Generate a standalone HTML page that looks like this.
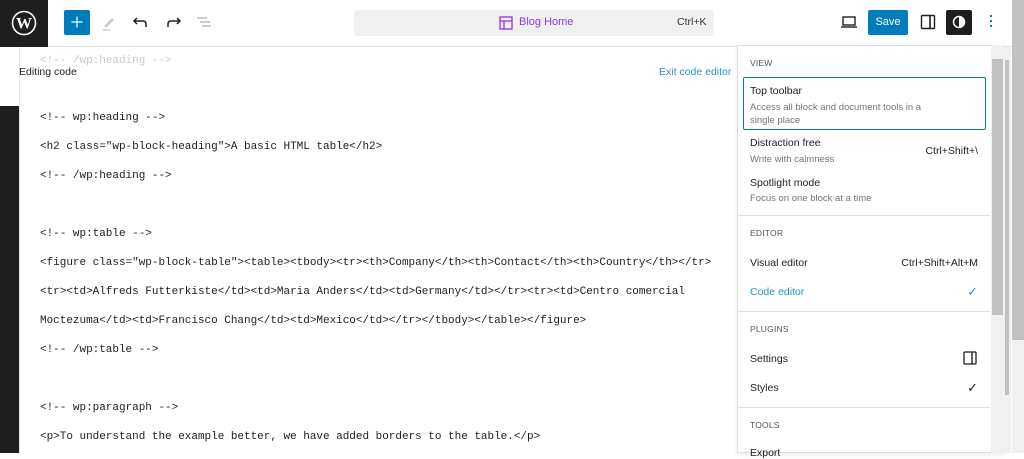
<!DOCTYPE html>
<html><head><style>
*{margin:0;padding:0;box-sizing:border-box}
body{width:1024px;height:453px;overflow:hidden;background:#fff;font-family:"Liberation Sans",sans-serif;position:relative;color:#1e1e1e}
.a{position:absolute}
.code{position:absolute;left:40px;font-family:"Liberation Mono",monospace;font-size:11px;letter-spacing:-0.02px;color:#1e1e1e;white-space:pre}
.lbl{position:absolute;left:750px;font-size:8.5px;color:#555;letter-spacing:.2px}
.it{position:absolute;left:750px;font-size:10.5px;color:#1e1e1e}
.sub{position:absolute;left:750px;font-size:9.5px;color:#757575}
.sc{position:absolute;right:46px;font-size:10.5px;color:#1e1e1e}
.sep{position:absolute;left:738px;width:252px;height:1px;background:#e0e0e0}
</style></head><body>
<div class="a" style="left:0;top:0;width:1012px;height:47px;border-bottom:1px solid #e0e0e0;background:#fff"></div>
<div class="a" style="left:0;top:0;width:48px;height:47px;background:#1e1e1e"></div>
<svg class="a" style="left:11px;top:10px" width="26" height="26" viewBox="0 0 26 26"><circle cx="13" cy="13" r="11.5" fill="none" stroke="#fff" stroke-width="1.6"/><text x="13" y="18.5" font-family="Liberation Serif" font-weight="bold" font-size="16" fill="#fff" text-anchor="middle">W</text></svg>
<div class="a" style="left:64px;top:10px;width:26px;height:25px;background:#007cba;border-radius:2px"></div>
<svg class="a" style="left:70px;top:15px" width="14" height="14" viewBox="0 0 14 14"><path d="M7 1.5v11M1.5 7h11" stroke="#fff" stroke-width="1.2"/></svg>
<svg class="a" style="left:100px;top:14px" width="18" height="18" viewBox="0 0 18 18"><path d="M4 12 L12 4 L14 6 L6 14" fill="#ccc"/><path d="M3 16h7" stroke="#ccc" stroke-width="1.5"/></svg>
<svg class="a" style="left:132px;top:15px" width="18" height="14" viewBox="0 0 18 14"><path d="M5 3 L2 6 L5 9 M2 6 H11 Q14 6 14 9 V12" fill="none" stroke="#1e1e1e" stroke-width="1.5"/></svg>
<svg class="a" style="left:164px;top:15px" width="18" height="14" viewBox="0 0 18 14"><path d="M13 3 L16 6 L13 9 M16 6 H7 Q4 6 4 9 V12" fill="none" stroke="#1e1e1e" stroke-width="1.5"/></svg>
<svg class="a" style="left:195px;top:15px" width="20" height="14" viewBox="0 0 20 14"><path d="M2 3h10M5 7h10M7 11h9" stroke="#bbb" stroke-width="1.4"/></svg>
<div class="a" style="left:354px;top:10px;width:360px;height:26px;background:#f0f0f0;border-radius:3px"></div>
<svg class="a" style="left:499px;top:16px" width="14" height="14" viewBox="0 0 14 14"><rect x="1" y="1" width="12" height="12" fill="none" stroke="#9b2fe0" stroke-width="1.3"/><path d="M1 5h12M5 5v8" stroke="#9b2fe0" stroke-width="1.3"/></svg>
<div class="a" style="left:519px;top:16px;font-size:11px;color:#8b3be0">Blog Home</div>
<div class="a" style="left:677px;top:16px;font-size:10.5px;color:#333">Ctrl+K</div>
<svg class="a" style="left:840px;top:15px" width="18" height="14" viewBox="0 0 18 14"><rect x="3" y="2" width="12" height="8" fill="none" stroke="#1e1e1e" stroke-width="1.4"/><path d="M1 12h16" stroke="#1e1e1e" stroke-width="1.4"/></svg>
<div class="a" style="left:868px;top:10px;width:40px;height:25px;background:#007cba;border-radius:2px;color:#fff;font-size:11px;text-align:center;line-height:25px">Save</div>
<svg class="a" style="left:920px;top:14px" width="16" height="16" viewBox="0 0 16 16"><rect x="1.5" y="1.5" width="13" height="13" rx="1" fill="none" stroke="#1e1e1e" stroke-width="1.4"/><path d="M10 1.5v13" stroke="#1e1e1e" stroke-width="1.6"/></svg>
<div class="a" style="left:946px;top:10px;width:26px;height:25px;background:#1e1e1e;border-radius:2px"></div>
<svg class="a" style="left:952px;top:15px" width="14" height="14" viewBox="0 0 14 14"><circle cx="7" cy="7" r="5.5" fill="none" stroke="#fff" stroke-width="1.5"/><path d="M7 1.5 A5.5 5.5 0 0 1 7 12.5Z" fill="#fff"/></svg>
<div class="a" style="left:990px;top:15px;width:2px;height:2px;background:#007cba;box-shadow:0 5px #007cba,0 10px #007cba"></div>
<div class="a" style="left:0;top:106px;width:19px;height:347px;background:#1e1e1e"></div>
<div class="a" style="left:19px;top:47px;width:1px;height:406px;background:#e6e6e6"></div>
<div class="code" style="top:55px;color:#ccc">&lt;!-- /wp:heading --&gt;</div>
<div class="a" style="left:19px;top:66px;font-size:10.5px">Editing code</div>
<div class="a" style="left:659px;top:66px;font-size:10.5px;color:#2a8fc9">Exit code editor</div>
<div class="code" style="top:112px">&lt;!-- wp:heading --&gt;</div>
<div class="code" style="top:141px">&lt;h2 class="wp-block-heading"&gt;A basic HTML table&lt;/h2&gt;</div>
<div class="code" style="top:170px">&lt;!-- /wp:heading --&gt;</div>
<div class="code" style="top:228px">&lt;!-- wp:table --&gt;</div>
<div class="code" style="top:257px">&lt;figure class="wp-block-table"&gt;&lt;table&gt;&lt;tbody&gt;&lt;tr&gt;&lt;th&gt;Company&lt;/th&gt;&lt;th&gt;Contact&lt;/th&gt;&lt;th&gt;Country&lt;/th&gt;&lt;/tr&gt;</div>
<div class="code" style="top:286px">&lt;tr&gt;&lt;td&gt;Alfreds Futterkiste&lt;/td&gt;&lt;td&gt;Maria Anders&lt;/td&gt;&lt;td&gt;Germany&lt;/td&gt;&lt;/tr&gt;&lt;tr&gt;&lt;td&gt;Centro comercial</div>
<div class="code" style="top:315px">Moctezuma&lt;/td&gt;&lt;td&gt;Francisco Chang&lt;/td&gt;&lt;td&gt;Mexico&lt;/td&gt;&lt;/tr&gt;&lt;/tbody&gt;&lt;/table&gt;&lt;/figure&gt;</div>
<div class="code" style="top:344px">&lt;!-- /wp:table --&gt;</div>
<div class="code" style="top:402px">&lt;!-- wp:paragraph --&gt;</div>
<div class="code" style="top:431px">&lt;p&gt;To understand the example better, we have added borders to the table.&lt;/p&gt;</div>
<div class="a" style="left:737px;top:45px;width:268px;height:408px;background:#fff;border:1px solid #ddd;box-shadow:0 2px 6px rgba(0,0,0,.08)"></div>
<div class="lbl" style="top:58px">VIEW</div>
<div class="a" style="left:743px;top:77px;width:243px;height:53px;border:1.5px solid #007cba;border-radius:2px"></div>
<div class="it" style="top:85px">Top toolbar</div>
<div class="sub" style="top:102px">Access all block and document tools in a</div>
<div class="sub" style="top:115px">single place</div>
<div class="it" style="top:137px">Distraction free</div>
<div class="sub" style="top:154px">Write with calmness</div>
<div class="sc" style="top:145px">Ctrl+Shift+\</div>
<div class="it" style="top:177px">Spotlight mode</div>
<div class="sub" style="top:193px">Focus on one block at a time</div>
<div class="sep" style="top:215px"></div>
<div class="lbl" style="top:228px">EDITOR</div>
<div class="it" style="top:257px">Visual editor</div>
<div class="sc" style="top:257px">Ctrl+Shift+Alt+M</div>
<div class="it" style="top:286px;color:#2a8fc9">Code editor</div>
<div class="sc" style="top:284px;color:#2a8fc9;font-size:13px">✓</div>
<div class="sep" style="top:311px"></div>
<div class="lbl" style="top:324px">PLUGINS</div>
<div class="it" style="top:353px">Settings</div>
<svg class="a" style="left:963px;top:351px" width="14" height="14" viewBox="0 0 14 14"><rect x="1" y="1" width="12" height="12" rx="1" fill="none" stroke="#1e1e1e" stroke-width="1.3"/><path d="M9 1v12" stroke="#1e1e1e" stroke-width="1.4"/></svg>
<div class="it" style="top:382px">Styles</div>
<div class="sc" style="top:380px;font-size:13px">✓</div>
<div class="sep" style="top:407px"></div>
<div class="lbl" style="top:420px">TOOLS</div>
<div class="it" style="top:447px">Export</div>
<div class="a" style="left:991px;top:45px;width:13px;height:408px;background:#f0f0f0"></div>
<div class="a" style="left:992px;top:59px;width:11px;height:256px;background:#c1c1c1"></div>
<div class="a" style="left:1004px;top:47px;width:7px;height:406px;background:#f0f0f0"></div>
<div class="a" style="left:1005px;top:60px;width:4px;height:335px;background:#c1c1c1"></div>
<div class="a" style="left:1012px;top:0;width:12px;height:453px;background:#f0f0f0"></div>
<div class="a" style="left:1012px;top:0;width:12px;height:340px;background:#c1c1c1"></div>
</body></html>
